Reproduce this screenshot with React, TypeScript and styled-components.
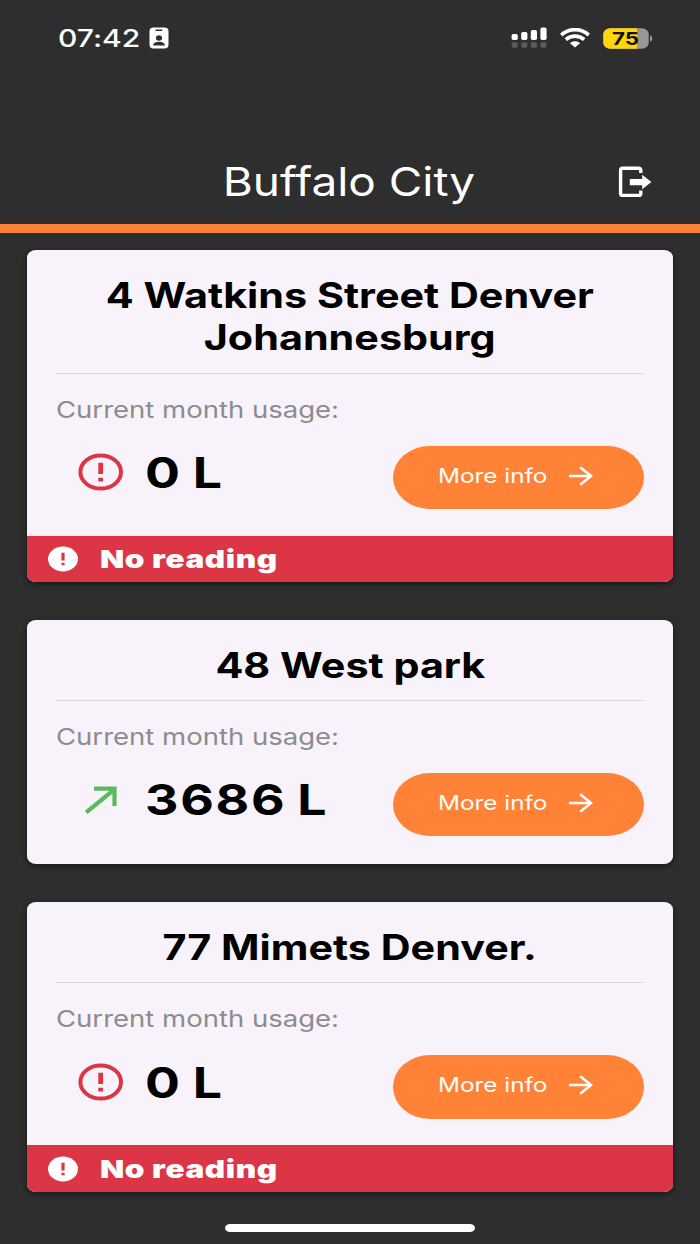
import React from "react";
import styled, { createGlobalStyle } from "styled-components";

const GlobalStyle = createGlobalStyle`
  * { box-sizing: border-box; }
  html, body { margin: 0; padding: 0; background: #2e2e2e; }
  body { font-family: Inter, "Liberation Sans", sans-serif; font-variant-ligatures: none; }
`;

const Screen = styled.div`
  width: 700px;
  height: 1244px;
  overflow: hidden;
  display: flex;
  flex-direction: column;
  background: #2e2e2e;
`;

/* Text set in an extended width */
const Wide = styled.span<{ $scale: number; $from?: string }>`
  display: inline-block;
  white-space: nowrap;
  transform: scaleX(${(p) => p.$scale});
  transform-origin: ${(p) => p.$from ?? "left"} center;
`;

const Header = styled.header`
  height: 233px;
  flex: none;
  border-bottom: 9px solid #ff8236;
`;

const StatusBar = styled.div`
  height: 76px;
  padding: 0 47px 0 58px;
  display: flex;
  align-items: center;
  justify-content: space-between;
`;

const StatusGroup = styled.div`
  display: flex;
  align-items: center;
`;

const Clock = styled.div`
  width: 91px;
  padding-top: 2px;
  font-size: 24px;
  line-height: 30px;
  font-weight: 500;
  color: #fff;
`;

const Battery = styled.div`
  position: relative;
  width: 50px;
  height: 21px;
  margin-left: 13px;
`;

const BatteryLevel = styled.div`
  position: absolute;
  inset: 0;
  display: flex;
  align-items: center;
  padding-left: 9px;
  font-size: 18px;
  line-height: 21px;
  font-weight: 700;
  color: #151204;
`;

const TitleBar = styled.div`
  height: 148px;
  padding: 63px 48px 0;
  display: grid;
  grid-template-columns: 34px 1fr 34px;
  align-items: center;
`;

const Title = styled.h1`
  margin: 0;
  padding-right: 2px;
  font-size: 40px;
  line-height: 50px;
  font-weight: 400;
  text-align: center;
  color: #fff;
`;

const IconButton = styled.button`
  border: 0;
  padding: 0;
  background: none;
  display: flex;
`;

const List = styled.main`
  padding: 17px 27px 0;
  display: flex;
  flex-direction: column;
  gap: 37.5px;
`;

const Card = styled.article`
  border-radius: 9px / 7.5px;
  background: #f8f3fa;
  overflow: hidden;
  box-shadow: 0 2px 5px 1px rgba(0, 0, 0, 0.38);
`;

const CardBody = styled.div<{ $short: boolean }>`
  padding: 24px 29px ${(p) => (p.$short ? 26.5 : 28)}px;
`;

const Address = styled.h2`
  margin: 0;
  padding-bottom: 14px;
  border-bottom: 1px solid #dcd7de;
  font-size: 35px;
  line-height: 42.3px;
  font-weight: 700;
  text-align: center;
  color: #000;
`;

const UsageLabel = styled.div`
  margin-top: 22px;
  font-size: 23.4px;
  line-height: 28px;
  color: #8d8b8f;
`;

const UsageRow = styled.div`
  margin-top: 22px;
  display: flex;
  align-items: flex-start;
`;

const UsageIcon = styled.div`
  width: 89px;
  padding: 7.7px 0 0 22px;
  display: flex;
`;

const UsageValue = styled.div`
  flex: 1;
  padding-top: 0.5px;
  font-size: 43px;
  line-height: 53px;
  font-weight: 700;
  letter-spacing: 1.4px;
  word-spacing: -2.4px;
  color: #000;
`;

const MoreButton = styled.button`
  width: 251px;
  height: 63.5px;
  border: 0;
  border-radius: 37px / 31.7px;
  padding: 0 51px 3px 45px;
  background: #ff8236;
  display: flex;
  align-items: center;
  justify-content: space-between;
  font-family: inherit;
  font-size: 20px;
  line-height: 24px;
  font-variant-ligatures: none;
  color: #fff;
`;

const Alert = styled.div`
  height: 46.5px;
  padding: 1px 0 0 21px;
  background: #dc3545;
  display: flex;
  align-items: center;
  gap: 22px;
  font-size: 25px;
  line-height: 30px;
  font-weight: 900;
  letter-spacing: 0.5px;
  color: #fff;
`;

const HomeIndicator = styled.div`
  flex: none;
  width: 250px;
  height: 8px;
  margin: auto auto 12px;
  border-radius: 5px / 4px;
  background: #fff;
`;

const BadgeIcon = () => (
  <svg width="20" height="22" viewBox="0 0 20 22">
    <rect x="0.5" y="0.5" width="19" height="21" rx="4" fill="#fff" />
    <rect x="6.4" y="2.6" width="7" height="1.4" rx="0.7" fill="#2e2e2e" />
    <ellipse cx="10" cy="11" rx="3.1" ry="2.8" fill="#2e2e2e" />
    <path d="M4 18.4C4.2 16 6.6 14.7 10 14.7s5.8 1.3 6 3.7Z" fill="#2e2e2e" />
  </svg>
);

const SignalIcon = () => (
  <svg width="36" height="22" viewBox="0 0 36 22">
    {[7, 5, 3, 0.5].map((top, i) => (
      <React.Fragment key={top}>
        <rect x={i * 9.6 + 0.6} y={top} width="6.2" height={13 - top} rx="1.7" fill="#fff" />
        <rect x={i * 9.6 + 0.6} y="15.3" width="6.2" height="5.4" rx="1.7" fill="#5b5b5b" />
      </React.Fragment>
    ))}
  </svg>
);

const WifiIcon = () => (
  <svg width="30" height="20" viewBox="0 0 30 20" style={{ marginLeft: 13 }}>
    <g fill="none" stroke="#fff" strokeWidth="3.7">
      <path d="M1.2 7.1C9 -0.2 21 -0.2 28.8 7.1" />
      <path d="M5.8 11.6C11 6.9 19 6.9 24.2 11.6" />
    </g>
    <path d="M10 15.2C12.9 12.6 17.1 12.6 20 15.2L15 19.6Z" fill="#fff" />
  </svg>
);

const BatteryShape = () => (
  <svg width="50" height="21" viewBox="0 0 50 21">
    <defs>
      <clipPath id="cell">
        <rect x="0.3" y="0.3" width="45.4" height="20.4" rx="7" ry="6" />
      </clipPath>
    </defs>
    <g clipPath="url(#cell)">
      <rect width="46" height="21" fill="#98989a" />
      <rect width="34" height="21" fill="#ffd60a" />
    </g>
    <path d="M47 7.2C50 8 50 13 47 13.8Z" fill="#98989a" />
  </svg>
);

const LogoutIcon = () => (
  <svg width="34" height="32" viewBox="0 0 34 32">
    <path
      d="M22.8 7V4.2Q22.8 2.2 20.6 2.2H4.8Q2.6 2.2 2.6 4.2V27.4Q2.6 29.4 4.8 29.4H20.6Q22.8 29.4 22.8 27.4V24.6"
      fill="none"
      stroke="#fff"
      strokeWidth="3.4"
    />
    <path d="M11.8 12.9H24.2V8.8L33.4 16L24.2 23.2V19.2H11.8Z" fill="#fff" />
  </svg>
);

const AlertOutlineIcon = () => (
  <svg width="46" height="38" viewBox="0 0 46 38">
    <ellipse cx="22.7" cy="19" rx="20.3" ry="16.6" fill="none" stroke="#dc3545" strokeWidth="4" />
    <path d="M22.7 9.7V21M22.7 24.8V28.4" stroke="#dc3545" strokeWidth="4.8" />
  </svg>
);

const TrendUpIcon = () => (
  <svg width="46" height="38" viewBox="0 0 46 38">
    <path
      d="M8.2 31.4L36.4 8.4M16 7.6H36.5V25"
      fill="none"
      stroke="#5cb85c"
      strokeWidth="4.2"
    />
  </svg>
);

const AlertFilledIcon = () => (
  <svg width="30" height="26" viewBox="0 0 30 26">
    <ellipse cx="15" cy="13" rx="15" ry="12.5" fill="#fff" />
    <path d="M15 6.8V14.6M15 16.8V19.2" stroke="#dc3545" strokeWidth="3.2" />
  </svg>
);

const ArrowIcon = () => (
  <svg width="24" height="20" viewBox="0 0 24 20">
    <path d="M0 10H22M11.2 1.2L22 10L11.2 18.8" fill="none" stroke="#fff" strokeWidth="2.6" />
  </svg>
);

interface Meter {
  address: string[];
  usage: string;
  reading: boolean;
}

const meters: Meter[] = [
  { address: ["4 Watkins Street Denver", "Johannesburg"], usage: "0 L", reading: false },
  { address: ["48 West park"], usage: "3686 L", reading: true },
  { address: ["77 Mimets Denver."], usage: "0 L", reading: false },
];

const MeterCard = ({ meter }: { meter: Meter }) => (
  <Card>
    <CardBody $short={!meter.reading}>
      <Address>
        {meter.address.map((line) => (
          <div key={line}>
            <Wide $scale={1.18} $from="center">{line}</Wide>
          </div>
        ))}
      </Address>
      <UsageLabel>
        <Wide $scale={1.176}>Current month usage:</Wide>
      </UsageLabel>
      <UsageRow>
        <UsageIcon>{meter.reading ? <TrendUpIcon /> : <AlertOutlineIcon />}</UsageIcon>
        <UsageValue>
          <Wide $scale={1.205}>{meter.usage}</Wide>
        </UsageValue>
        <MoreButton>
          <Wide $scale={1.215}>More info</Wide>
          <ArrowIcon />
        </MoreButton>
      </UsageRow>
    </CardBody>
    {!meter.reading && (
      <Alert>
        <AlertFilledIcon />
        <Wide $scale={1.26}>No reading</Wide>
      </Alert>
    )}
  </Card>
);

export default function App() {
  return (
    <>
      <GlobalStyle />
      <Screen>
        <Header>
          <StatusBar>
            <StatusGroup>
              <Clock>
                <Wide $scale={1.25}>07:42</Wide>
              </Clock>
              <BadgeIcon />
            </StatusGroup>
            <StatusGroup>
              <SignalIcon />
              <WifiIcon />
              <Battery>
                <BatteryShape />
                <BatteryLevel>
                  <Wide $scale={1.24}>75</Wide>
                </BatteryLevel>
              </Battery>
            </StatusGroup>
          </StatusBar>
          <TitleBar>
            <span />
            <Title>
              <Wide $scale={1.148} $from="center">Buffalo City</Wide>
            </Title>
            <IconButton aria-label="Log out">
              <LogoutIcon />
            </IconButton>
          </TitleBar>
        </Header>
        <List>
          {meters.map((meter) => (
            <MeterCard key={meter.address[0]} meter={meter} />
          ))}
        </List>
        <HomeIndicator />
      </Screen>
    </>
  );
}
